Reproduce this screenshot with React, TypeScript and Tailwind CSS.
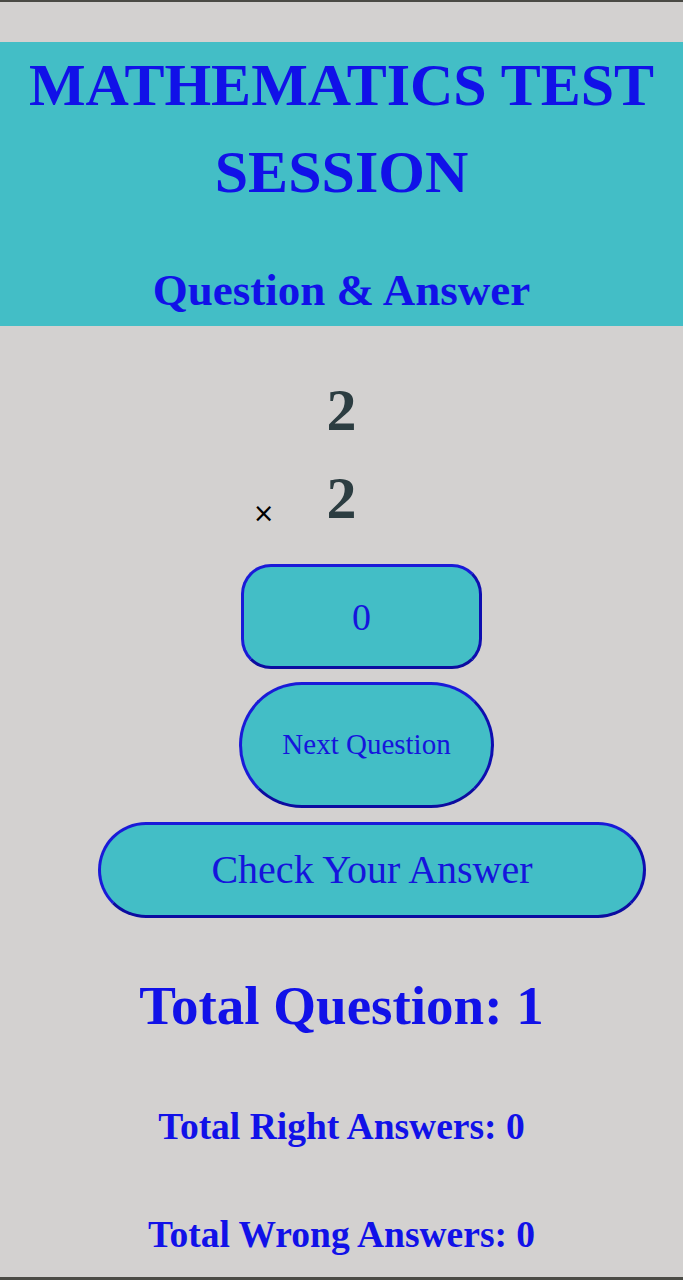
import { useState } from 'react'

export default function App() {
  const [first] = useState(2)
  const [second] = useState(2)
  const [answer, setAnswer] = useState('0')
  const [total] = useState(1)
  const [right] = useState(0)
  const [wrong] = useState(0)

  return (
    <div className="h-[1280px] overflow-hidden bg-[#d3d1d0] border-t-2 border-b-[3px] border-[#4a4a45] font-['Liberation_Serif',serif]">
      {/* Header */}
      <div className="mt-[40px] bg-[#43bec6] pb-[11px] text-center text-[#1111e8]">
        <h1 className="text-[60px] leading-[87px] font-bold">MATHEMATICS TEST SESSION</h1>
        <h2 className="mt-[49px] text-[45px] leading-[50px] font-bold">Question &amp; Answer</h2>
      </div>

      {/* Question */}
      <div className="mt-[40px] text-[60px] leading-[88px] font-bold text-[#2c3d41]">
        <div className="text-center">{first}</div>
        <div className="grid grid-cols-[1fr_auto_1fr]">
          <span className="justify-self-end self-end mr-[52px] mb-[16px] font-['DejaVu_Sans',sans-serif] font-normal text-[26px] leading-[26px] text-black">
            ×
          </span>
          <span>{second}</span>
          <span />
        </div>
      </div>

      <div className="flex flex-col items-center">
        <input
          value={answer}
          onChange={(e) => setAnswer(e.target.value)}
          className="mt-[22px] ml-[40px] w-[241px] h-[105px] rounded-[30px] border-[3px] border-[#1a1ad8] border-b-[#0c0ca0] border-r-[#0e0eb0] bg-[#43bec6] text-center text-[38px] text-[#1515dc] outline-none"
        />
        <button className="mt-[13px] ml-[50px] w-[255px] h-[126px] rounded-full border-[3px] border-[#1a1ad8] border-b-[#0c0ca0] border-r-[#0e0eb0] bg-[#43bec6] text-[29px] text-[#1515dc]">
          Next Question
        </button>
        <button className="mt-[14px] ml-[61px] w-[548px] h-[96px] rounded-full border-[3px] border-[#1a1ad8] border-b-[#0c0ca0] border-r-[#0e0eb0] bg-[#43bec6] text-[40px] text-[#1515dc]">
          Check Your Answer
        </button>
      </div>

      {/* Score */}
      <div className="text-center font-bold text-[#1111e8]">
        <h2 className="mt-[57px] text-[55px] leading-[62px]">Total Question: {total}</h2>
        <h3 className="mt-[68px] text-[37.5px] leading-[44px]">Total Right Answers: {right}</h3>
        <h3 className="mt-[64px] text-[37.5px] leading-[44px]">Total Wrong Answers: {wrong}</h3>
      </div>
    </div>
  )
}
